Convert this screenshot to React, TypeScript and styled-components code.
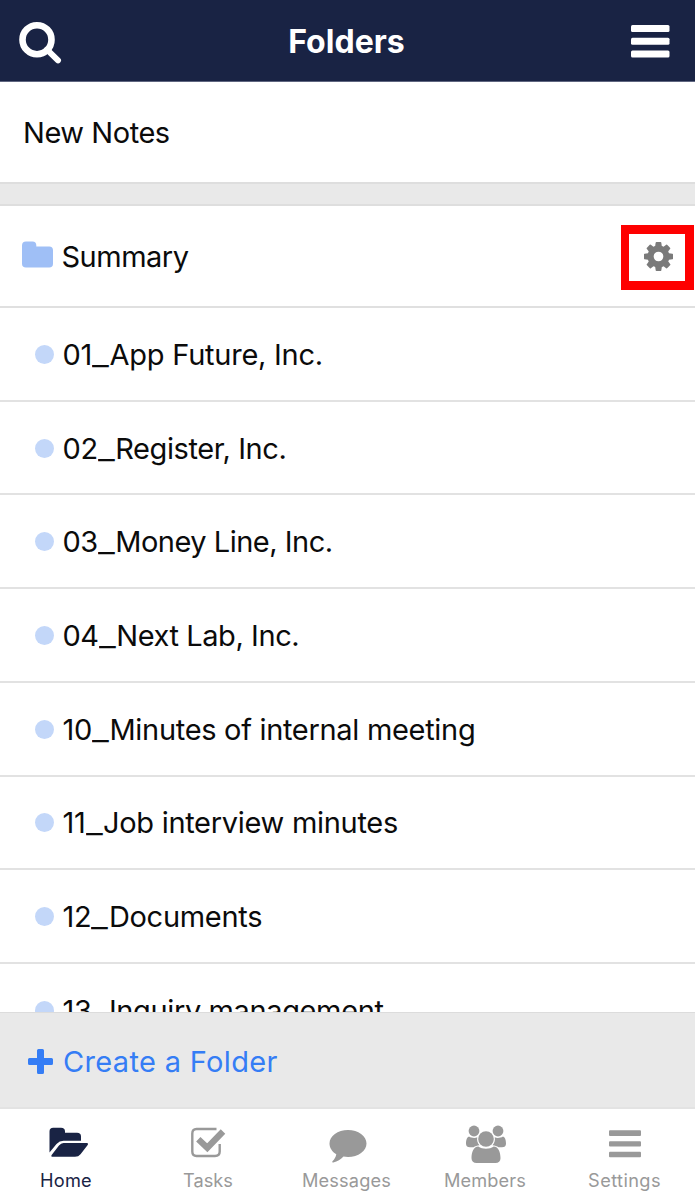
import React from "react";
import styled, { createGlobalStyle } from "styled-components";

const GlobalStyle = createGlobalStyle`
  * { box-sizing: border-box; }
  body { margin: 0; background: #fff; }
`;

const Screen = styled.div`
  display: flex;
  flex-direction: column;
  width: 695px;
  height: 1200px;
  overflow: hidden;
  background: #fff;
  color: #0b0b0b;
  font-family: Inter, "Liberation Sans", sans-serif;
  font-size: 29px;
  line-height: 36px;
  svg { display: block; flex: none; }
`;

const Header = styled.header`
  display: flex;
  flex: none;
  align-items: center;
  justify-content: space-between;
  height: 82px;
  padding: 1px 25px 0 19px;
  background: #192344;
  border-bottom: 1px solid #5f6680;
  color: #fff;
`;

const Title = styled.h1`
  margin: 0;
  padding-top: 1px;
  font-size: 32px;
  font-weight: 700;
  letter-spacing: 0.05px;
`;

const NewNotes = styled.div`
  flex: none;
  height: 100px;
  padding: 33px 23px 0;
  letter-spacing: -0.45px;
`;

const Divider = styled.div`
  flex: none;
  height: 24px;
  background: #e9e9e9;
  border-top: 2px solid #dedede;
  border-bottom: 2px solid #dedede;
`;

const List = styled.div`
  display: flex;
  flex: 1;
  flex-direction: column;
  min-height: 0;
  overflow: hidden;
`;

const SummaryRow = styled.div`
  display: flex;
  flex: none;
  align-items: center;
  justify-content: space-between;
  height: 102px;
  padding: 0 1px 0 22px;
  border-bottom: 2px solid #e0e0e0;
`;

const FolderName = styled.div`
  display: flex;
  align-items: center;
  gap: 8.5px;
  svg { margin-bottom: 4px; }
`;

const GearFrame = styled.div`
  display: flex;
  align-items: center;
  justify-content: center;
  width: 73px;
  height: 65px;
  margin-top: 3px;
  padding: 0 0 2px 2px;
  border: 9px solid #fe0000;
  border-left-width: 8px;
`;

const Row = styled.div`
  display: flex;
  flex: none;
  align-items: center;
  height: 93.72px;
  padding-left: 35px;
  border-bottom: 2px solid #e2e2e2;
`;

const Dot = styled.span`
  width: 19px;
  height: 19px;
  margin: 1px 8.5px 0 0;
  border-radius: 50%;
  background: #c3d7f9;
`;

const Label = styled.span<{ $spacing?: number }>`
  white-space: pre;
  padding-top: 2px;
  letter-spacing: ${(p) => p.$spacing ?? 0}px;
`;

const Underscore = styled.span`
  display: inline-block;
  width: 17.5px;
  transform: scaleX(1.27);
  transform-origin: left;
`;

const CreateBar = styled.div`
  display: flex;
  flex: none;
  align-items: center;
  gap: 10px;
  height: 97px;
  padding: 2px 28px 0;
  background: #e9e9e9;
  border-top: 1px solid #dcdcdc;
  border-bottom: 2px solid #e3e3e3;
  color: #357df5;
`;

const TabBar = styled.nav`
  display: flex;
  flex: none;
  height: 91px;
`;

const Tab = styled.div<{ $width: number; $active?: boolean }>`
  display: flex;
  flex: none;
  flex-direction: column;
  align-items: center;
  width: ${(p) => p.$width}px;
  padding-top: 13px;
  color: ${(p) => (p.$active ? "#192344" : "#999")};
  font-size: 18.2px;
  line-height: 24px;
`;

const TabLabel = styled.span<{ $spacing: number }>`
  margin-top: 4px;
  letter-spacing: ${(p) => p.$spacing}px;
`;

const SearchIcon = () => (
  <svg width="43" height="46" viewBox="0 0 43 46" fill="none" stroke="currentColor">
    <circle cx="18" cy="21.7" r="14.5" strokeWidth="6.6" />
    <path d="M28 31.700L39 42.300" strokeWidth="6" strokeLinecap="round" />
  </svg>
);

const MenuIcon = () => (
  <svg width="39" height="34" viewBox="0 0 39 34" fill="currentColor">
    <rect x="0" y="0.9" width="38.5" height="7" rx="1.5" />
    <rect x="0" y="13.7" width="38.5" height="7" rx="1.5" />
    <rect x="0" y="26.6" width="38.5" height="7" rx="1.5" />
  </svg>
);

const FolderIcon = () => (
  <svg width="31" height="27" viewBox="0 0 31 27" fill="#9fbff6">
    <path d="M0 4.5Q0 .5 4 .5H10.5Q14.3 .5 14.3 4.3V5.5H27.2Q31 5.5 31 9.3V22.8Q31 26.6 27.2 26.6H4Q0 26.6 0 22.8Z" />
  </svg>
);

const GearIcon = () => (
  <svg width="29" height="29" viewBox="0 128 1536 1536" fill="#7a7a7a">
    <path d="M1024 896q0-106-75-181t-181-75-181 75-75 181 75 181 181 75 181-75 75-181zm512-109v222q0 12-8 23t-20 13l-185 28q-19 54-39 91 35 50 107 138 10 12 10 25t-9 23q-27 37-99 108t-94 71q-12 0-26-9l-138-108q-44 23-91 38-16 136-29 186-7 28-36 28h-222q-14 0-24.5-8.500t-11.500-21.500l-28-184q-49-16-90-37l-141 107q-10 9-25 9-14 0-25-11-126-114-165-168-7-10-7-23 0-12 8-23 15-21 51-66.500t54-70.500q-27-50-41-99l-183-27q-13-2-21-12.500t-8-23.500v-222q0-12 8-23t19-13l186-28q14-46 39-92-40-57-107-138-10-12-10-24 0-10 9-23 26-36 98.500-107.500t94.500-71.500q13 0 26 10l138 107q44-23 91-38 16-136 29-186 7-28 36-28h222q14 0 24.500 8.500t11.500 21.500l28 184q49 16 90 37l142-107q9-9 24-9 13 0 25 10 129 119 165 170 7 8 7 22 0 12-8 23-15 21-51 66.500t-54 70.500q26 50 41 98l183 28q13 2 21 12.500t8 23.500z" />
  </svg>
);

const PlusIcon = () => (
  <svg width="25" height="25" viewBox="0 0 25 25" fill="currentColor">
    <path d="M10.500 0H14.500Q16 0 16 1.500V9H23.500Q25 9 25 10.500V14.500Q25 16 23.500 16H16V23.500Q16 25 14.500 25H10.500Q9 25 9 23.500V16H1.500Q0 16 0 14.500V10.500Q0 9 1.500 9H9V1.500Q9 0 10.500 0Z" />
  </svg>
);

const HomeIcon = () => (
  <svg width="45" height="42" viewBox="-5 0 45 42" fill="currentColor">
    <path d="M.5 9.500Q.5 5.800 4.200 5.800H12Q16 5.800 16 9.500V10.800H28Q32 10.800 32 14.500V18.800H14.500Q10.500 18.800 7.500 22L.5 30.500Z" />
    <path d="M14.500 21H37.500Q40 21 38.500 23.300L31.500 32.200Q29.500 34.800 26 34.800H4Q1.200 34.800 3 32.500L10 23.500Q12 21 14.500 21Z" />
  </svg>
);

const TasksIcon = () => (
  <svg width="36" height="42" viewBox="0 0 36 42" fill="none" stroke="currentColor">
    <path d="M26.500 7H6.500Q2.300 7 2.300 11.500V29.500Q2.300 34 6.500 34H25Q29.700 34 29.700 29.500V22" strokeWidth="2.400" />
    <path d="M8.300 17.300L17.300 25.800L33 9.500" strokeWidth="6.300" />
  </svg>
);

const MessageIcon = () => (
  <svg width="40" height="42" viewBox="-2 0 40 42" fill="currentColor">
    <path d="M19 8C29.300 8 37.500 14 37.500 21.500S29.300 35 19 35C17.300 35 15.900 34.900 14.500 34.600C11.800 37.500 8.500 39.700 4.300 40.500C3.200 40.600 2.900 39.600 3.700 38.900C5.700 37 6.800 35 7.300 32.300C3.200 29.800 .5 25.900 .5 21.500C.5 14 8.700 8 19 8Z" />
  </svg>
);

const MembersIcon = () => (
  <svg width="42" height="42" viewBox="-2 0 42 42" fill="currentColor">
    <circle cx="8" cy="9" r="5.400" />
    <circle cx="32" cy="9" r="5.400" />
    <path d="M3 14.500C5.500 16.200 9.500 16.300 11.300 15.300C10.600 18.500 11.500 21 13.500 23.300C11 23.400 9 24.200 7.500 25.300H4C1.500 25.300 0 24 0 21.700C0 18.500 .7 15.200 3 14.500Z" />
    <path d="M37 14.500C34.500 16.200 30.500 16.300 28.700 15.300C29.400 18.500 28.500 21 26.500 23.300C29 23.400 31 24.200 32.500 25.300H36C38.500 25.300 40 24 40 21.700C40 18.500 39.300 15.200 37 14.500Z" />
    <circle cx="20" cy="17" r="7.800" />
    <path d="M12.300 24.500C16.500 27.500 23.500 27.500 27.700 24.500C32.500 24.500 34.500 30.500 34.500 36.200C34.500 39.300 32.500 41 29.500 41H10.500C7.500 41 5.500 39.300 5.500 36.200C5.500 30.500 7.500 24.500 12.300 24.500Z" />
  </svg>
);

const SettingsIcon = () => (
  <svg width="32" height="42" viewBox="0 0 32 42" fill="currentColor">
    <rect y="8.300" width="32" height="5.600" rx="1" />
    <rect y="19.200" width="32" height="5.400" rx="1" />
    <rect y="29.800" width="32" height="5.400" rx="1" />
  </svg>
);

const folders = [
  { number: "01", name: "App Future, Inc.", spacing: -0.25 },
  { number: "02", name: "Register, Inc.", spacing: -0.4 },
  { number: "03", name: "Money Line, Inc.", spacing: -0.5 },
  { number: "04", name: "Next Lab, Inc.", spacing: -0.42 },
  { number: "10", name: "Minutes of internal meeting", spacing: -0.31 },
  { number: "11", name: "Job interview minutes", spacing: -0.3 },
  { number: "12", name: "Documents", spacing: -0.3 },
  { number: "13", name: "Inquiry management", spacing: -0.38 },
];

const tabs = [
  { name: "Home", Icon: HomeIcon, width: 132, spacing: 0.2, active: true },
  { name: "Tasks", Icon: TasksIcon, width: 152, spacing: 0 },
  { name: "Messages", Icon: MessageIcon, width: 125, spacing: 0.15 },
  { name: "Members", Icon: MembersIcon, width: 152, spacing: 0.1 },
  { name: "Settings", Icon: SettingsIcon, width: 127, spacing: 0.4 },
];

export default function App() {
  return (
    <>
      <GlobalStyle />
      <Screen>
        <Header>
          <SearchIcon />
          <Title>Folders</Title>
          <MenuIcon />
        </Header>
        <NewNotes>New Notes</NewNotes>
        <Divider />
        <List>
          <SummaryRow>
            <FolderName>
              <FolderIcon />
              <Label $spacing={-0.5}>Summary</Label>
            </FolderName>
            <GearFrame>
              <GearIcon />
            </GearFrame>
          </SummaryRow>
          {folders.map((f) => (
            <Row key={f.number}>
              <Dot />
              <Label $spacing={f.spacing}>
                {f.number}
                <Underscore>_</Underscore>
                {f.name}
              </Label>
            </Row>
          ))}
        </List>
        <CreateBar>
          <PlusIcon />
          <Label $spacing={0.33}>Create a Folder</Label>
        </CreateBar>
        <TabBar>
          {tabs.map(({ name, Icon, width, spacing, active }) => (
            <Tab key={name} $width={width} $active={active}>
              <Icon />
              <TabLabel $spacing={spacing}>{name}</TabLabel>
            </Tab>
          ))}
        </TabBar>
      </Screen>
    </>
  );
}
